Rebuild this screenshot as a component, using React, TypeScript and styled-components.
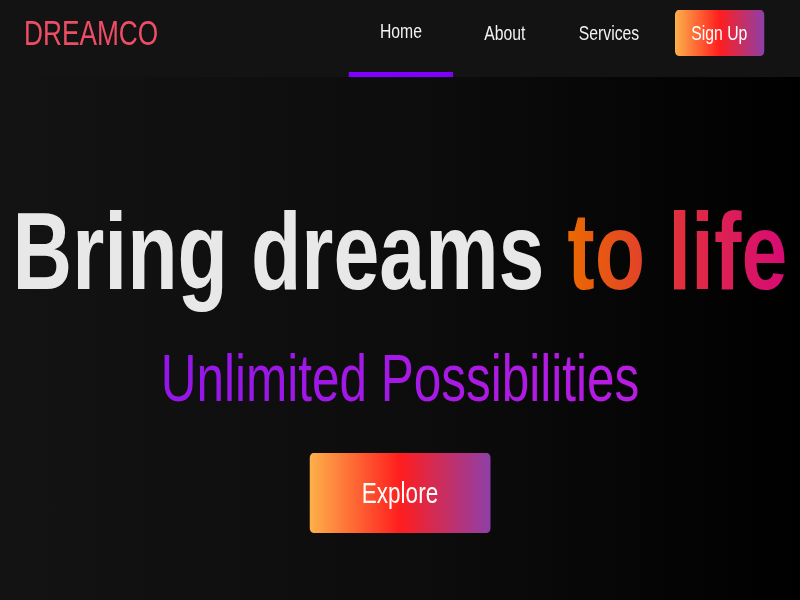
import React from "react";
import styled, { createGlobalStyle } from "styled-components";

const GlobalStyle = createGlobalStyle`
  html, body {
    margin: 0;
    padding: 0;
    width: 800px;
    height: 600px;
    overflow: hidden;
    background: #000;
  }
  * { box-sizing: border-box; }
`;

/* The reference is a wider page squeezed horizontally to 800px, so the page is laid out
   at 1066.67px and scaled by 0.75 on the x axis. */
const Page = styled.div`
  width: 1066.67px;
  height: 600px;
  transform: scaleX(0.75);
  transform-origin: 0 0;
  display: flex;
  flex-direction: column;
  font-family: "Liberation Sans", Arial, sans-serif;
  background: linear-gradient(to right, #131313 0%, #0c0c0c 55%, #000 100%);
`;

const Header = styled.header`
  height: 77px;
  flex: 0 0 77px;
  display: flex;
  justify-content: space-between;
  align-items: stretch;
  padding: 0 48px 0 32px;
  background: #131313;
`;

const Logo = styled.div`
  display: flex;
  align-items: center;
  padding-bottom: 11px;
  font-size: 35px;
  color: #ef4d65;
  letter-spacing: 0;
`;

const Nav = styled.nav`
  display: flex;
  align-items: stretch;
`;

const NavLink = styled.a<{ $active?: boolean }>`
  width: 138.7px;
  display: flex;
  align-items: center;
  justify-content: center;
  font-size: 21px;
  color: #f2f2f2;
  text-decoration: none;
  border-bottom: 5px solid ${(p) => (p.$active ? "#8000ff" : "transparent")};
  padding-bottom: ${(p) => (p.$active ? "11px" : "5.5px")};
`;

const SignUp = styled.button`
  align-self: flex-start;
  margin-top: 10px;
  margin-left: 18.4px;
  width: 119px;
  height: 46px;
  border: none;
  border-radius: 5px;
  background: linear-gradient(to right, #fdb04a, #ff1e1e 50%, #8e3fa8);
  color: #fff;
  font-family: inherit;
  font-size: 21px;
  padding: 0;
  cursor: pointer;
`;

const Hero = styled.main`
  flex: 1;
  display: flex;
  flex-direction: column;
  align-items: center;
  padding-top: 108px;
`;

const Headline = styled.h1`
  margin: 0;
  font-size: 110px;
  line-height: 132px;
  font-weight: 700;
  color: #e8e8e8;
  white-space: nowrap;
`;

const Accent = styled.span`
  background: linear-gradient(to right, #ea6a00, #e0303c 50%, #d70a76);
  -webkit-background-clip: text;
  background-clip: text;
  color: transparent;
`;

const Subtitle = styled.h2`
  margin: 22px 0 0;
  font-size: 66px;
  line-height: 79px;
  font-weight: 400;
  white-space: nowrap;
  background: linear-gradient(to right, #9316ea, #b81ce1);
  -webkit-background-clip: text;
  background-clip: text;
  color: transparent;
`;

const Explore = styled.button`
  margin-top: 35px;
  width: 241px;
  height: 80px;
  border: none;
  border-radius: 5px;
  background: linear-gradient(to right, #fdb04a, #ff1e1e 50%, #8e3fa8);
  color: #fff;
  font-family: inherit;
  font-size: 30px;
  padding: 0;
  cursor: pointer;
`;

export default function App() {
  return (
    <>
      <GlobalStyle />
      <Page>
        <Header>
          <Logo>DREAMCO</Logo>
          <Nav>
            <NavLink $active>Home</NavLink>
            <NavLink>About</NavLink>
            <NavLink>Services</NavLink>
            <SignUp>Sign Up</SignUp>
          </Nav>
        </Header>
        <Hero>
          <Headline>
            Bring dreams <Accent>to life</Accent>
          </Headline>
          <Subtitle>Unlimited Possibilities</Subtitle>
          <Explore>Explore</Explore>
        </Hero>
      </Page>
    </>
  );
}
